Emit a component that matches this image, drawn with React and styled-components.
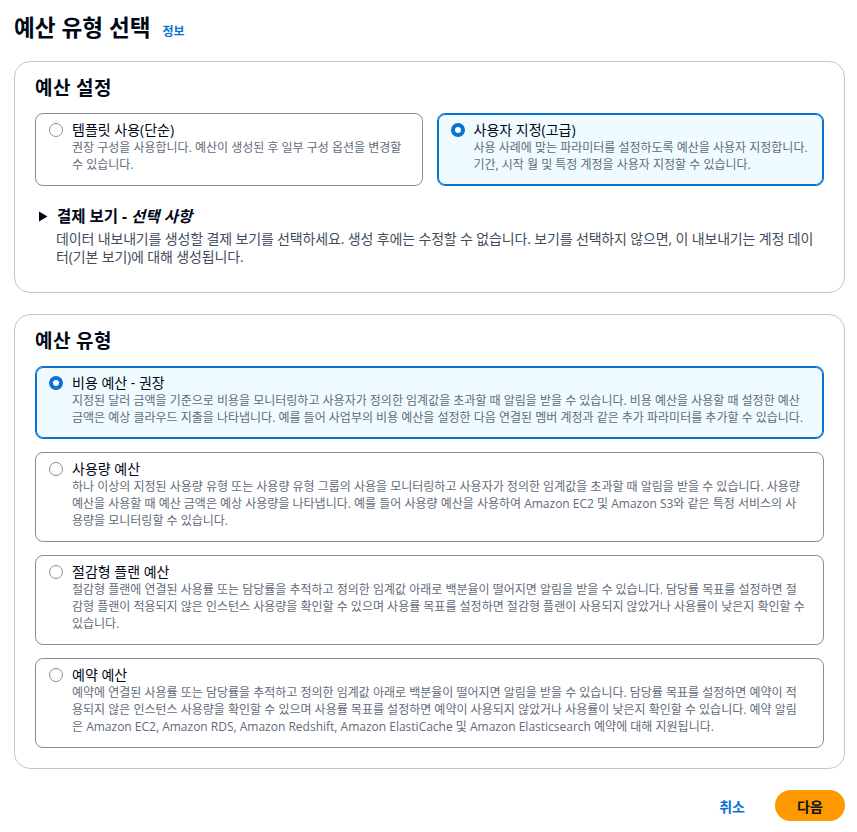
import React, { useState } from "react";
import styled, { createGlobalStyle, css } from "styled-components";

const Global = createGlobalStyle`
  html, body { margin: 0; padding: 0; background: #ffffff; }
  body {
    font-family: "Open Sans", "Noto Sans CJK KR", sans-serif;
    color: #000716;
    -webkit-font-smoothing: antialiased;
  }
  * { box-sizing: border-box; }
`;

const Page = styled.div`
  width: 857px;
  padding: 13px 12px 13px 14px;
`;

const TitleRow = styled.div`
  display: flex;
  align-items: baseline;
  gap: 12px;
  height: 30px;
`;

const PageTitle = styled.h1`
  margin: 0;
  font-size: 22.6px;
  line-height: 30px;
  font-weight: 700;
`;

const InfoLink = styled.a`
  font-size: 12px;
  font-weight: 700;
  color: #0972d3;
  text-decoration: none;
`;

const Container = styled.section`
  margin-top: ${(p) => p.$mt}px;
  border: 1px solid #c6c6cd;
  border-radius: 16px;
  background: #fff;
  padding: 15px 20px ${(p) => p.$pb}px 20px;
`;

const SectionTitle = styled.h2`
  margin: 0 0 14px;
  font-size: 19px;
  letter-spacing: 0.4px;
  line-height: 22px;
  font-weight: 700;
`;

const TileGrid = styled.div`
  display: grid;
  grid-template-columns: ${(p) => (p.$cols === 2 ? "1fr 1fr" : "1fr")};
  gap: ${(p) => (p.$cols === 2 ? "14px" : "13px")};
`;

const Tile = styled.label`
  display: flex;
  align-items: flex-start;
  gap: 9px;
  padding: 7px ${(p) => (p.$compact ? 11 : 16)}px 12px 13px;
  border: 1px solid #8c8c94;
  border-radius: 8px;
  background: #fff;
  cursor: pointer;
  ${(p) =>
    p.$checked &&
    css`
      border-color: #0972d3;
      box-shadow: inset 0 0 0 1px #0972d3;
      background: #f0fbff;
    `}
`;

const Radio = styled.span`
  flex: none;
  width: 14px;
  height: 14px;
  margin-top: 2px;
  border-radius: 50%;
  background: #fff;
  border: ${(p) => (p.$checked ? "4px solid #0972d3" : "1.5px solid #8c8c94")};
`;

const TileBody = styled.div`
  display: flex;
  flex-direction: column;
  min-width: 0;
`;

const TileTitle = styled.span`
  font-size: 14px;
  line-height: 18px;
  color: #000716;
`;

const TileDesc = styled.span`
  font-size: 12px;
  line-height: 17px;
  color: #5f6b7a;
`;

const Expand = styled.div`
  margin-top: 20px;
  padding-left: 3px;
`;

const ExpandHeader = styled.div`
  display: flex;
  align-items: center;
  gap: 9px;
  font-size: 15.5px;
  line-height: 20px;
  font-weight: 700;
  em { font-style: italic; }
`;

const ExpandDesc = styled.p`
  margin: 4px 0 0 18px;
  font-size: 14px;
  letter-spacing: -0.15px;
  line-height: 18px;
  color: #414d5c;
`;

const Footer = styled.div`
  display: flex;
  justify-content: flex-end;
  align-items: center;
  gap: 30px;
  margin-top: 21px;
`;

const LinkButton = styled.button`
  border: 0;
  background: none;
  padding: 0;
  font: inherit;
  font-size: 14px;
  font-weight: 700;
  color: #0972d3;
  cursor: pointer;
`;

const PrimaryButton = styled.button`
  border: 0;
  background: #ff9900;
  color: #0f141a;
  font: inherit;
  font-size: 14px;
  font-weight: 700;
  height: 31px;
  width: 70px;
  border-radius: 20px;
  cursor: pointer;
`;

const Caret = () => (
  <svg width="10" height="11" viewBox="0 0 10 11" aria-hidden="true">
    <path d="M1 0.5 L9.5 5.5 L1 10.5 Z" fill="#000716" />
  </svg>
);

const settingOptions = [
  {
    id: "template",
    title: "템플릿 사용(단순)",
    desc: "권장 구성을 사용합니다. 예산이 생성된 후 일부 구성 옵션을 변경할 수 있습니다.",
  },
  {
    id: "custom",
    title: "사용자 지정(고급)",
    desc: "사용 사례에 맞는 파라미터를 설정하도록 예산을 사용자 지정합니다. 기간, 시작 월 및 특정 계정을 사용자 지정할 수 있습니다.",
  },
];

const typeOptions = [
  {
    id: "cost",
    title: "비용 예산 - 권장",
    desc: "지정된 달러 금액을 기준으로 비용을 모니터링하고 사용자가 정의한 임계값을 초과할 때 알림을 받을 수 있습니다. 비용 예산을 사용할 때 설정한 예산 금액은 예상 클라우드 지출을 나타냅니다. 예를 들어 사업부의 비용 예산을 설정한 다음 연결된 멤버 계정과 같은 추가 파라미터를 추가할 수 있습니다.",
  },
  {
    id: "usage",
    title: "사용량 예산",
    desc: "하나 이상의 지정된 사용량 유형 또는 사용량 유형 그룹의 사용을 모니터링하고 사용자가 정의한 임계값을 초과할 때 알림을 받을 수 있습니다. 사용량 예산을 사용할 때 예산 금액은 예상 사용량을 나타냅니다. 예를 들어 사용량 예산을 사용하여 Amazon EC2 및 Amazon S3와 같은 특정 서비스의 사용량을 모니터링할 수 있습니다.",
  },
  {
    id: "savings",
    title: "절감형 플랜 예산",
    desc: "절감형 플랜에 연결된 사용률 또는 담당률을 추적하고 정의한 임계값 아래로 백분율이 떨어지면 알림을 받을 수 있습니다. 담당률 목표를 설정하면 절감형 플랜이 적용되지 않은 인스턴스 사용량을 확인할 수 있으며 사용률 목표를 설정하면 절감형 플랜이 사용되지 않았거나 사용률이 낮은지 확인할 수 있습니다.",
  },
  {
    id: "reservation",
    title: "예약 예산",
    desc: "예약에 연결된 사용률 또는 담당률을 추적하고 정의한 임계값 아래로 백분율이 떨어지면 알림을 받을 수 있습니다. 담당률 목표를 설정하면 예약이 적용되지 않은 인스턴스 사용량을 확인할 수 있으며 사용률 목표를 설정하면 예약이 사용되지 않았거나 사용률이 낮은지 확인할 수 있습니다. 예약 알림은 Amazon EC2, Amazon RDS, Amazon Redshift, Amazon ElastiCache 및 Amazon Elasticsearch 예약에 대해 지원됩니다.",
  },
];

function TileGroup({ options, value, onChange, cols }) {
  return (
    <TileGrid $cols={cols}>
      {options.map((o) => {
        const checked = value === o.id;
        return (
          <Tile
            key={o.id}
            $checked={checked}
            $compact={cols === 2}
            onClick={() => onChange(o.id)}
          >
            <Radio $checked={checked} />
            <TileBody>
              <TileTitle>{o.title}</TileTitle>
              <TileDesc>{o.desc}</TileDesc>
            </TileBody>
          </Tile>
        );
      })}
    </TileGrid>
  );
}

export default function App() {
  const [setting, setSetting] = useState("custom");
  const [type, setType] = useState("cost");

  return (
    <Page>
      <Global />
      <TitleRow>
        <PageTitle>예산 유형 선택</PageTitle>
        <InfoLink href="#">정보</InfoLink>
      </TitleRow>

      <Container $mt={18} $pb={26}>
        <SectionTitle>예산 설정</SectionTitle>
        <TileGroup options={settingOptions} value={setting} onChange={setSetting} cols={2} />
        <Expand>
          <ExpandHeader>
            <Caret />
            <span>
              결제 보기 - <em>선택 사항</em>
            </span>
          </ExpandHeader>
          <ExpandDesc>
            데이터 내보내기를 생성할 결제 보기를 선택하세요. 생성 후에는 수정할 수 없습니다. 보기를
            선택하지 않으면, 이 내보내기는 계정 데이터(기본 보기)에 대해 생성됩니다.
          </ExpandDesc>
        </Expand>
      </Container>

      <Container $mt={21} $pb={20}>
        <SectionTitle>예산 유형</SectionTitle>
        <TileGroup options={typeOptions} value={type} onChange={setType} cols={1} />
      </Container>

      <Footer>
        <LinkButton>취소</LinkButton>
        <PrimaryButton>다음</PrimaryButton>
      </Footer>
    </Page>
  );
}
